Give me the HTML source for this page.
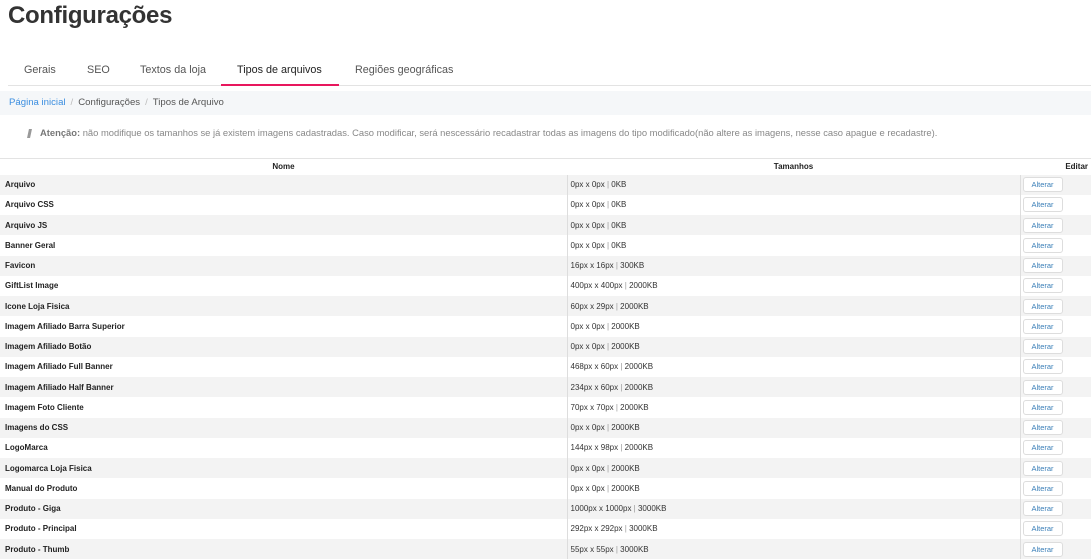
<!DOCTYPE html>
<html><head><meta charset="utf-8"><style>
*{margin:0;padding:0;box-sizing:border-box}
body{width:1091px;height:559px;overflow:hidden;background:#fff;font-family:"Liberation Sans",sans-serif;color:#333;position:relative}
h1{position:absolute;left:8px;top:2px;font-size:24px;font-weight:bold;color:#333;letter-spacing:-0.3px}
.tabs{position:absolute;left:8px;top:55px;width:1083px;height:31px;border-bottom:1px solid #e3e3e3}
.tab{position:absolute;top:9px;font-size:10.8px;color:#555}
.tab.act{color:#222}
.ul{position:absolute;left:213px;top:29px;width:118px;height:2px;background:#e8175d}
.bc{position:absolute;left:0;top:91px;width:1091px;height:24px;background:#f5f7f9;font-size:9.6px;padding:6px 9px;color:#555}
.bc a{color:#3b8ee0}
.bc .s{color:#bbb;margin:0 5px}
.warn{position:absolute;left:40px;top:127px;font-size:9.4px;color:#888}
.warn b{color:#777}
.bar{position:absolute;left:28px;top:129px;width:3px;height:9px;background:#999;transform:skewX(-12deg)}
table{position:absolute;left:0;top:158px;width:1091px;border-collapse:collapse;font-size:8px;border-top:1px solid #e3e3e3}
th{height:16px;font-size:8px;color:#222;font-weight:bold}
td{height:20.26px;padding:0 5px;color:#333}
td.n{font-weight:bold;width:567px;color:#222}
td.t{border-left:1px solid #ddd;border-right:1px solid #ddd;padding-left:3px}
td.e{width:71px;padding:0 2px}
tr:nth-child(even) td{background:#f3f3f3}
.btn{display:inline-block;width:40px;height:15px;border:1px solid #ddd;border-radius:3px;background:#fff;color:#3b7fb8;font-size:7.5px;text-align:center;line-height:13px}
.p{color:#999}
</style></head><body>
<h1>Configurações</h1>
<div class="tabs">
<span class="tab" style="left:16px">Gerais</span>
<span class="tab" style="left:79px">SEO</span>
<span class="tab" style="left:132px">Textos da loja</span>
<span class="tab act" style="left:229px">Tipos de arquivos</span>
<span class="tab" style="left:347px">Regiões geográficas</span>
<div class="ul"></div>
</div>
<div class="bc"><a>Página inicial</a><span class="s">/</span>Configurações<span class="s">/</span>Tipos de Arquivo</div>
<div class="bar"></div>
<div class="warn"><b>Atenção:</b> não modifique os tamanhos se já existem imagens cadastradas. Caso modificar, será nescessário recadastrar todas as imagens do tipo modificado(não altere as imagens, nesse caso apague e recadastre).</div>
<table>
<tr><th>Nome</th><th>Tamanhos</th><th style="text-align:right;padding-right:3px">Editar</th></tr>
<tr><td class="n">Arquivo</td><td class="t">0px x 0px <span class="p">|</span> 0KB</td><td class="e"><span class="btn">Alterar</span></td></tr>
<tr><td class="n">Arquivo CSS</td><td class="t">0px x 0px <span class="p">|</span> 0KB</td><td class="e"><span class="btn">Alterar</span></td></tr>
<tr><td class="n">Arquivo JS</td><td class="t">0px x 0px <span class="p">|</span> 0KB</td><td class="e"><span class="btn">Alterar</span></td></tr>
<tr><td class="n">Banner Geral</td><td class="t">0px x 0px <span class="p">|</span> 0KB</td><td class="e"><span class="btn">Alterar</span></td></tr>
<tr><td class="n">Favicon</td><td class="t">16px x 16px <span class="p">|</span> 300KB</td><td class="e"><span class="btn">Alterar</span></td></tr>
<tr><td class="n">GiftList Image</td><td class="t">400px x 400px <span class="p">|</span> 2000KB</td><td class="e"><span class="btn">Alterar</span></td></tr>
<tr><td class="n">Icone Loja Fisica</td><td class="t">60px x 29px <span class="p">|</span> 2000KB</td><td class="e"><span class="btn">Alterar</span></td></tr>
<tr><td class="n">Imagem Afiliado Barra Superior</td><td class="t">0px x 0px <span class="p">|</span> 2000KB</td><td class="e"><span class="btn">Alterar</span></td></tr>
<tr><td class="n">Imagem Afiliado Botão</td><td class="t">0px x 0px <span class="p">|</span> 2000KB</td><td class="e"><span class="btn">Alterar</span></td></tr>
<tr><td class="n">Imagem Afiliado Full Banner</td><td class="t">468px x 60px <span class="p">|</span> 2000KB</td><td class="e"><span class="btn">Alterar</span></td></tr>
<tr><td class="n">Imagem Afiliado Half Banner</td><td class="t">234px x 60px <span class="p">|</span> 2000KB</td><td class="e"><span class="btn">Alterar</span></td></tr>
<tr><td class="n">Imagem Foto Cliente</td><td class="t">70px x 70px <span class="p">|</span> 2000KB</td><td class="e"><span class="btn">Alterar</span></td></tr>
<tr><td class="n">Imagens do CSS</td><td class="t">0px x 0px <span class="p">|</span> 2000KB</td><td class="e"><span class="btn">Alterar</span></td></tr>
<tr><td class="n">LogoMarca</td><td class="t">144px x 98px <span class="p">|</span> 2000KB</td><td class="e"><span class="btn">Alterar</span></td></tr>
<tr><td class="n">Logomarca Loja Fisica</td><td class="t">0px x 0px <span class="p">|</span> 2000KB</td><td class="e"><span class="btn">Alterar</span></td></tr>
<tr><td class="n">Manual do Produto</td><td class="t">0px x 0px <span class="p">|</span> 2000KB</td><td class="e"><span class="btn">Alterar</span></td></tr>
<tr><td class="n">Produto - Giga</td><td class="t">1000px x 1000px <span class="p">|</span> 3000KB</td><td class="e"><span class="btn">Alterar</span></td></tr>
<tr><td class="n">Produto - Principal</td><td class="t">292px x 292px <span class="p">|</span> 3000KB</td><td class="e"><span class="btn">Alterar</span></td></tr>
<tr><td class="n">Produto - Thumb</td><td class="t">55px x 55px <span class="p">|</span> 3000KB</td><td class="e"><span class="btn">Alterar</span></td></tr>
</table>
</body></html>
